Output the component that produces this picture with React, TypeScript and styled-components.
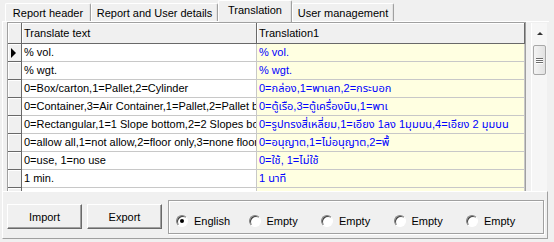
import React, { FC } from "react";
import styled, { createGlobalStyle } from "styled-components";

const GlobalStyle = createGlobalStyle`
  html, body {
    margin: 0;
    padding: 0;
    background: #f0f0f0;
  }
  body {
    font-family: "Liberation Sans", Arial, sans-serif;
    font-size: 11px;
    color: #000;
  }
`;

const Window = styled.div`
  width: 554px;
  height: 242px;
  display: flex;
  flex-direction: column;
  background: #f0f0f0;
  overflow: hidden;
`;

const TabBar = styled.div`
  height: 21px;
  display: flex;
  align-items: flex-end;
  padding-left: 5px;
  flex-shrink: 0;
`;

interface TabProps {
  w: number;
  active?: boolean;
}
const Tab = styled.div<TabProps>`
  position: relative;
  z-index: ${(p) => (p.active ? 2 : 1)};
  box-sizing: border-box;
  width: ${(p) => `${p.w}px`};
  height: ${(p) => (p.active ? "22px" : "18px")};
  margin-bottom: ${(p) => (p.active ? "-1px" : "0")};
  display: flex;
  align-items: center;
  justify-content: center;
  padding-bottom: ${(p) => (p.active ? "3px" : "0")};
  background: #f0f0f0;
  border-top: 1px solid #fff;
  border-left: 1px solid #fff;
  border-right: 1px solid #a0a0a0;
  border-radius: 2px 2px 0 0;
  box-shadow: inset -1px 0 0 #e3e3e3;
  white-space: nowrap;
`;

const Page = styled.div`
  flex: 1;
  min-height: 0;
  display: flex;
  align-items: stretch;
  margin-left: 2px;
  margin-right: 5px;
  padding: 0 0 0 4px;
  border-top: 1px solid #fff;
  border-left: 1px solid #fff;
`;

const Grid = styled.div`
  width: 519px;
  box-sizing: border-box;
  border: 1px solid #a0a0a0;
  border-bottom: none;
  overflow: hidden;
  background: #fff;
`;

const Row = styled.div`
  display: grid;
  grid-template-columns: 14px 235px 1fr;
`;

interface CellProps {
  head?: boolean;
}
const FixedCell = styled.div<CellProps>`
  box-sizing: border-box;
  height: ${(p) => (p.head ? "21px" : "18px")};
  background: #f0f0f0;
  border-right: 1px solid #696969;
  border-bottom: 1px solid #696969;
  box-shadow: inset 1px 1px 0 #fff;
  display: flex;
  align-items: center;
  padding-left: 2px;
  white-space: nowrap;
  overflow: hidden;
`;

const Arrow = styled.div`
  width: 0;
  height: 0;
  margin-left: 1px;
  border-top: 5px solid transparent;
  border-bottom: 5px solid transparent;
  border-left: 5px solid #000;
`;

interface DataCellProps {
  alt?: boolean;
}
const DataCell = styled.div<DataCellProps>`
  box-sizing: border-box;
  height: 18px;
  line-height: 17px;
  padding-left: 2px;
  background: ${(p) => (p.alt ? "#ffffe1" : "#fff")};
  color: ${(p) => (p.alt ? "#0000ff" : "#000")};
  font-family: ${(p) =>
    p.alt
      ? `"Liberation Sans", "Noto Sans Thai", "Loma", "Garuda", "DejaVu Sans", sans-serif`
      : `"Liberation Sans", Arial, sans-serif`};
  border-right: 1px solid #c8c8c8;
  border-bottom: 1px solid #c8c8c8;
  white-space: nowrap;
  overflow: hidden;
`;

const ScrollBar = styled.div`
  width: 16px;
  margin-left: 5px;
  margin-top: 1px;
  box-sizing: border-box;
  background: #f6f6f6;
  border-left: 1px solid #fff;
  display: flex;
  flex-direction: column;
  align-items: center;
`;

const ScrollUp = styled.div`
  height: 20px;
  display: flex;
  align-items: center;
  justify-content: center;
  &::after {
    content: "";
    border-left: 3px solid transparent;
    border-right: 3px solid transparent;
    border-bottom: 3px solid #333;
  }
`;

const Thumb = styled.div`
  margin-top: 2px;
  width: 13px;
  height: 30px;
  box-sizing: border-box;
  border: 1px solid #a8a8a8;
  border-radius: 2px;
  background: linear-gradient(to right, #f4f4f4, #e2e2e2);
  display: flex;
  flex-direction: column;
  justify-content: center;
  align-items: center;
  gap: 1px;
`;

const Grip = styled.div`
  width: 7px;
  height: 1px;
  background: #6c6c6c;
  box-shadow: 0 1px 0 #fff;
`;

const BottomPanel = styled.div`
  height: 48px;
  flex-shrink: 0;
  box-sizing: border-box;
  margin: 0 6px 3px 2px;
  border-top: 1px solid #fff;
  border-left: 1px solid #fff;
  border-right: 1px solid #a0a0a0;
  border-bottom: 1px solid #a0a0a0;
  display: flex;
  align-items: flex-start;
  padding: 8px 0 0 4px;
`;

const Button = styled.button`
  width: 75px;
  height: 25px;
  margin: 4px 5px 0 0;
  padding: 0;
  font: inherit;
  color: #000;
  background: #f0f0f0;
  border: 1px solid;
  border-color: #fff #696969 #696969 #fff;
  box-shadow: inset -1px -1px 0 #a0a0a0;
`;

const GroupBox = styled.div`
  width: 376px;
  height: 34px;
  margin-left: 1px;
  box-sizing: border-box;
  border: 1px solid #a0a0a0;
  box-shadow: inset 1px 1px 0 #fff, 1px 1px 0 #fff;
  display: flex;
  align-items: center;
  padding: 7px 0 0 7px;
`;

const RadioItem = styled.label`
  width: 72.5px;
  display: flex;
  align-items: center;
  gap: 6px;
  white-space: nowrap;
`;

interface RadioProps {
  checked?: boolean;
}
const RadioCircle = styled.span<RadioProps>`
  box-sizing: border-box;
  width: 12px;
  height: 12px;
  border-radius: 50%;
  border: 1px solid;
  border-color: #808080 #fff #fff #808080;
  background: #fff;
  box-shadow: inset 1px 1px 0 #404040;
  display: flex;
  align-items: center;
  justify-content: center;
  &::after {
    content: "";
    width: 4px;
    height: 4px;
    border-radius: 50%;
    background: ${(p) => (p.checked ? "#000" : "transparent")};
  }
`;

const rows: [string, string][] = [
  ["% vol.", "% vol."],
  ["% wgt.", "% wgt."],
  ["0=Box/carton,1=Pallet,2=Cylinder", "0=กล่อง,1=พาเลท,2=กระบอก"],
  [
    "0=Container,3=Air Container,1=Pallet,2=Pallet box",
    "0=ตู้เรือ,3=ตู้เครื่องบิน,1=พาเ",
  ],
  [
    "0=Rectangular,1=1 Slope bottom,2=2 Slopes bottom",
    "0=รูปทรงสี่เหลี่ยม,1=เอียง 1ลง 1มุมบน,4=เอียง 2 มุมบน",
  ],
  [
    "0=allow all,1=not allow,2=floor only,3=none floor",
    "0=อนุญาต,1=ไม่อนุญาต,2=พื้",
  ],
  ["0=use, 1=no use", "0=ใช้, 1=ไม่ใช้"],
  ["1 min.", "1 นาที"],
  ["", ""],
];

const languages = ["English", "Empty", "Empty", "Empty", "Empty"];

const App: FC = () => {
  return (
    <Window>
      <GlobalStyle />
      <TabBar>
        <Tab w={86}>Report header</Tab>
        <Tab w={127}>Report and User details</Tab>
        <Tab w={74} active>
          Translation
        </Tab>
        <Tab w={102}>User management</Tab>
      </TabBar>
      <Page>
        <Grid>
          <Row>
            <FixedCell head />
            <FixedCell head>Translate text</FixedCell>
            <FixedCell head>Translation1</FixedCell>
          </Row>
          {rows.map(([src, tr], i) => (
            <Row key={i}>
              <FixedCell>{i === 0 && <Arrow />}</FixedCell>
              <DataCell>{src}</DataCell>
              <DataCell alt>{tr}</DataCell>
            </Row>
          ))}
        </Grid>
        <ScrollBar>
          <ScrollUp />
          <Thumb>
            <Grip />
            <Grip />
            <Grip />
          </Thumb>
        </ScrollBar>
      </Page>
      <BottomPanel>
        <Button>Import</Button>
        <Button>Export</Button>
        <GroupBox>
          {languages.map((l, i) => (
            <RadioItem key={i}>
              <RadioCircle checked={i === 0} />
              {l}
            </RadioItem>
          ))}
        </GroupBox>
      </BottomPanel>
    </Window>
  );
};

export default App;
